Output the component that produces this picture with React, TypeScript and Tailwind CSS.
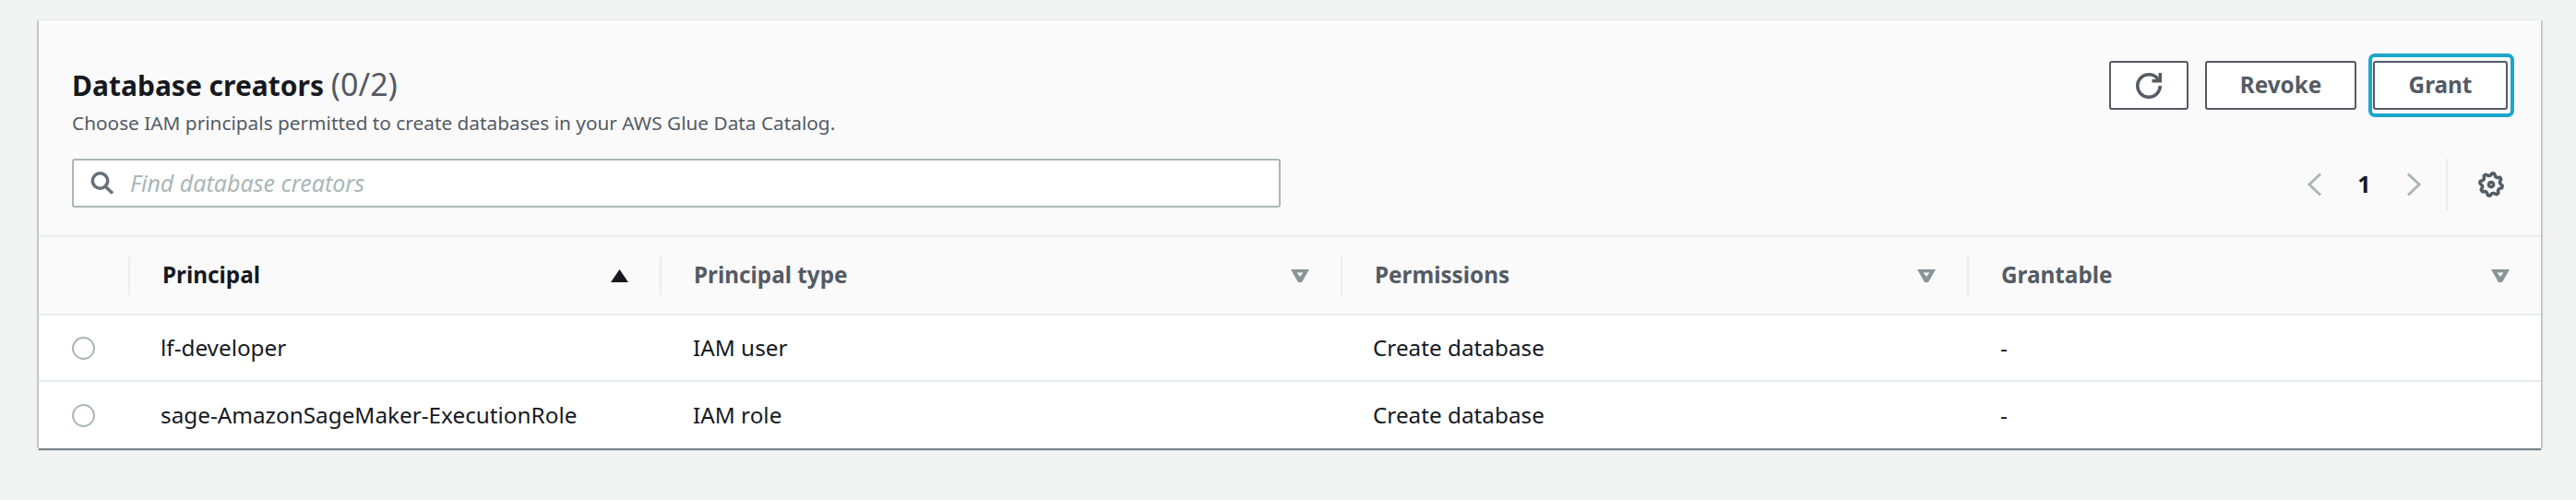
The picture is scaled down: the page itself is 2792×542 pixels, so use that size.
const FONT = "font-['Noto_Sans',sans-serif]";

const rows = [
  { principal: "lf-developer", type: "IAM user", permissions: "Create database", grantable: "-" },
  { principal: "sage-AmazonSageMaker-ExecutionRole", type: "IAM role", permissions: "Create database", grantable: "-" },
];

const COLS = "grid grid-cols-[97px_576px_738px_679px_1fr]";

// 8 teeth, drawn as a ring of points around the centre
const gearPath = Array.from({ length: 32 }, (_, i) => {
  const angle = ((i + 0.5) * Math.PI) / 16;
  const r = i % 4 < 2 ? 7 : 5.6;
  return `${(8 + r * Math.cos(angle)).toFixed(2)} ${(8 + r * Math.sin(angle)).toFixed(2)}`;
}).join("L");

function RefreshIcon() {
  return (
    <svg viewBox="0 0 16 16" className="h-[28px] w-[28px] fill-none stroke-[#545b64] stroke-2">
      <path d="M15 8c0 3.87-3.13 7-7 7s-7-3.13-7-7 3.13-7 7-7c2.37 0 4.47 1.18 5.74 2.98" />
      <path d="M15 0v5h-5" />
    </svg>
  );
}

function GearIcon() {
  return (
    <svg viewBox="0 0 16 16" className="h-[28px] w-[28px] fill-none stroke-[#545b64] stroke-2">
      <path d={`M${gearPath}Z`} strokeLinejoin="round" />
      <circle cx="8" cy="8" r="1.5" />
    </svg>
  );
}

function SearchIcon() {
  return (
    <svg viewBox="0 0 26 25" className="h-[25px] w-[26px] fill-none stroke-[#687078] stroke-[3.5]">
      <circle cx="10.5" cy="10" r="8.2" />
      <path d="M16 16l8 7.500" />
    </svg>
  );
}

function FilterCaret() {
  return (
    <svg viewBox="0 0 20 14" className="h-[14px] w-[20px] fill-[#879596]">
      <path fillRule="evenodd" d="M0 0H20L12 14H8ZM6.500 3.500H13.500L10 8Z" />
    </svg>
  );
}

function SortCaret() {
  return (
    <svg viewBox="0 0 19 14" className="h-[14px] w-[19px] fill-[#16191f]">
      <path d="M9.500 0L19 14H0Z" />
    </svg>
  );
}

function HeaderCell({ label, sorted }: { label: string; sorted?: boolean }) {
  return (
    <div className="flex h-[42px] items-center justify-between border-l-2 border-[#eaeded] pr-[34px] pl-[35px]">
      <span className={`text-[24.3px] font-bold ${sorted ? "text-[#16191f]" : "text-[#545b64]"}`}>{label}</span>
      {sorted ? <SortCaret /> : <FilterCaret />}
    </div>
  );
}

export default function App() {
  return (
    <div className={`h-[542px] bg-[#f2f3f3] pt-[22px] pr-[38px] pl-[42px] ${FONT} text-[#16191f]`}>
      <div className="h-[464px] overflow-hidden bg-white shadow-[0_2px_1px_0_rgba(0,28,36,0.5),2px_0_1px_0_rgba(0,28,36,0.15),-2px_0_1px_0_rgba(0,28,36,0.15)]">
        <div className="flex h-[235px] flex-col border-b-2 border-[#eaeded] bg-[#fafafa] px-[36px] pt-[44px]">
          <div className="flex h-[106px] items-start justify-between">
            <div className="pt-[5px]">
              <h2 className="text-[30px] leading-[40px] font-bold">
                Database creators <span className="text-[34px] font-normal text-[#545b64]">(0/2)</span>
              </h2>
              <p className="mt-[5px] text-[20.8px] leading-[30px] text-[#545b64]">
                Choose IAM principals permitted to create databases in your AWS Glue Data Catalog.
              </p>
            </div>
            <div className="flex items-center">
              <button className="flex h-[53px] w-[86px] items-center justify-center rounded-[3px] border-2 border-[#545b64] bg-white">
                <RefreshIcon />
              </button>
              <button className="ml-[18px] h-[53px] w-[164px] rounded-[3px] border-2 border-[#545b64] bg-white text-[24.3px] font-bold text-[#545b64]">
                Revoke
              </button>
              <button className="relative ml-[18px] h-[53px] w-[146px] rounded-[3px] border-2 border-[#545b64] bg-white text-[24.3px] font-bold text-[#545b64]">
                Grant
                <span className="absolute -top-[10px] -right-[9px] -bottom-[10px] -left-[7px] rounded-[7px] border-4 border-[#1ba6cc]" />
              </button>
            </div>
          </div>
          <div className="flex items-start justify-between">
            <div className="flex h-[53px] w-[1310px] items-center gap-[17px] rounded-[3px] border-2 border-[#aab7b8] bg-white pl-[18px]">
              <SearchIcon />
              <span className="text-[25px] text-[#aab7b8] italic">Find database creators</span>
            </div>
            <div className="mr-[4px] flex h-[56px] items-center">
              <svg viewBox="0 0 17 26" className="h-[26px] w-[17px] fill-none stroke-[#aab7b8] stroke-[3]">
                <path d="M15 1.500L3 13l12 11.500" />
              </svg>
              <span className="w-[91px] text-center text-[25px] font-bold">1</span>
              <svg viewBox="0 0 17 26" className="h-[26px] w-[17px] fill-none stroke-[#aab7b8] stroke-[3]">
                <path d="M2 1.500L14 13 2 24.500" />
              </svg>
              <div className="mr-[33px] ml-[26px] h-[56px] w-[2px] bg-[#eaeded]" />
              <GearIcon />
            </div>
          </div>
        </div>
        <div className={`${COLS} h-[85px] items-center border-b-2 border-[#eaeded] bg-[#fafafa]`}>
          <div />
          <HeaderCell label="Principal" sorted />
          <HeaderCell label="Principal type" />
          <HeaderCell label="Permissions" />
          <HeaderCell label="Grantable" />
        </div>
        {rows.map((row, i) => (
          <div key={row.principal} className={`${COLS} h-[72px] items-center text-[24.3px] ${i === 0 ? "border-b-2 border-[#eaeded]" : ""}`}>
            <div className="pl-[36px]">
              <div className="h-[25px] w-[25px] rounded-full border-2 border-[#aab7b8] bg-white" />
            </div>
            <div className="pl-[35px]">{row.principal}</div>
            <div className="pl-[36px]">{row.type}</div>
            <div className="pl-[35px]">{row.permissions}</div>
            <div className="pl-[36px]">{row.grantable}</div>
          </div>
        ))}
      </div>
    </div>
  );
}
